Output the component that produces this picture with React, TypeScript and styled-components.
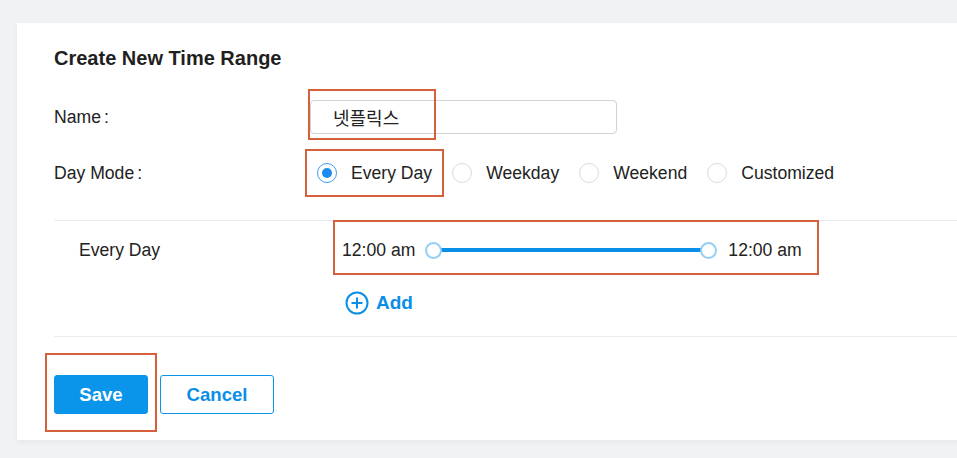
import styled, { createGlobalStyle } from "styled-components";

const Global = createGlobalStyle`
    html, body {
        margin: 0;
        padding: 0;
        background: #f1f2f4;
        overflow: hidden;
    }
    body {
        font-family: "Liberation Sans", Arial, "Noto Sans CJK KR", sans-serif;
        color: #222;
    }
`;

const Page = styled.div`
    position: relative;
    width: 957px;
    height: 458px;
    padding: 23px 0 0 17px;
    box-sizing: border-box;
`;

const Card = styled.section`
    width: 960px;
    height: 417px;
    box-sizing: border-box;
    background: #fff;
    padding: 23px 0 0 37px;
    box-shadow: 0 2px 6px rgba(0, 0, 0, 0.05);
`;

const Title = styled.h2`
    margin: 0 0 23px;
    height: 24px;
    line-height: 24px;
    font-size: 20px;
    font-weight: bold;
    color: #1f1f1f;
`;

const Form = styled.div`
    display: flex;
    flex-direction: column;
    gap: 8px;
    margin-bottom: 23px;
`;

const FormRow = styled.div`
    display: flex;
    align-items: center;
    height: 48px;
`;

const Label = styled.div`
    width: 256px;
    font-size: 17.6px;
    color: #222;
`;

const Colon = styled.span`
    margin-left: 3px;
`;

const TextInput = styled.input`
    width: 307px;
    height: 34px;
    box-sizing: border-box;
    border: 1px solid #cfd2d6;
    border-radius: 4px;
    padding: 0 0 0 22px;
    font-family: "Noto Sans CJK KR", sans-serif;
    font-size: 18px;
    color: #222;
    outline: none;
`;

const RadioGroup = styled.div`
    display: flex;
    align-items: center;
    padding-left: 7px;
    gap: 20px;
`;

const RadioItem = styled.label`
    display: flex;
    align-items: center;
    gap: 14px;
    font-size: 17.6px;
    color: #222;
`;

const RadioDot = styled.span<{ $checked?: boolean }>`
    width: 20px;
    height: 20px;
    box-sizing: border-box;
    border-radius: 50%;
    border: 1px solid ${(p) => (p.$checked ? "#3d9cf0" : "#d9dadc")};
    display: flex;
    align-items: center;
    justify-content: center;
    &::after {
        content: "";
        width: 10px;
        height: 10px;
        border-radius: 50%;
        background: ${(p) => (p.$checked ? "#1a8cf0" : "transparent")};
    }
`;

const Divider = styled.div`
    height: 1px;
    background: #ebecee;
`;

const TimeSection = styled.div`
    display: flex;
    padding-top: 14px;
    height: 115px;
    box-sizing: border-box;
`;

const TimeLabel = styled.div`
    width: 288px;
    padding-left: 25px;
    box-sizing: border-box;
    height: 30px;
    line-height: 30px;
    font-size: 17.6px;
    color: #222;
`;

const TimeColumn = styled.div`
    display: flex;
    flex-direction: column;
    gap: 26px;
`;

const SliderRow = styled.div`
    display: flex;
    align-items: center;
    height: 30px;
    font-size: 17.6px;
    color: #222;
`;

const Track = styled.div`
    position: relative;
    width: 292px;
    height: 17px;
    margin: 0 11px 0 10px;
    display: flex;
    align-items: center;
    &::before {
        content: "";
        position: absolute;
        left: 8px;
        right: 8px;
        height: 4px;
        background: #0a8fe8;
    }
`;

const Thumb = styled.span<{ $side: "left" | "right" }>`
    position: absolute;
    ${(p) => p.$side}: 0;
    width: 17px;
    height: 17px;
    box-sizing: border-box;
    border-radius: 50%;
    border: 2px solid #94cff6;
    background: #fff;
`;

const AddButton = styled.button`
    display: flex;
    align-items: center;
    gap: 7px;
    height: 24px;
    border: none;
    background: none;
    padding: 0 0 0 3px;
    font-family: inherit;
    font-size: 19px;
    font-weight: bold;
    color: #0a8fe8;
    cursor: pointer;
`;

const Actions = styled.div`
    display: flex;
    gap: 12px;
    padding-top: 38px;
`;

const Button = styled.button<{ $primary?: boolean }>`
    height: 39px;
    padding: 0;
    width: ${(p) => (p.$primary ? 94 : 114)}px;
    box-sizing: border-box;
    border-radius: 3px;
    border: 1px solid #0a94ea;
    background: ${(p) => (p.$primary ? "#0a94ea" : "#fff")};
    color: ${(p) => (p.$primary ? "#fff" : "#0a8fe8")};
    font-family: inherit;
    font-size: 18.6px;
    font-weight: bold;
    cursor: pointer;
`;

const Mark = styled.div`
    position: absolute;
    box-sizing: border-box;
    border: 2px solid #d6603c;
    pointer-events: none;
`;

const days = ["Every Day", "Weekday", "Weekend", "Customized"];

const marks = [
    { left: 308, top: 89, width: 128, height: 51 },
    { left: 305, top: 149, width: 139, height: 48 },
    { left: 333, top: 220, width: 486, height: 55 },
    { left: 45, top: 353, width: 112, height: 79 },
];

function PlusCircle() {
    return (
        <svg width="24" height="24" viewBox="0 0 24 24" fill="none" stroke="#0a8fe8" strokeWidth="2">
            <circle cx="12" cy="12" r="10.5" />
            <path d="M12 6.5v11M6.5 12h11" />
        </svg>
    );
}

export default function App() {
    return (
        <Page>
            <Global />
            <Card>
                <Title>Create New Time Range</Title>
                <Form>
                    <FormRow>
                        <Label>
                            Name<Colon>:</Colon>
                        </Label>
                        <TextInput defaultValue="넷플릭스" />
                    </FormRow>
                    <FormRow>
                        <Label>
                            Day Mode<Colon>:</Colon>
                        </Label>
                        <RadioGroup>
                            {days.map((d, i) => (
                                <RadioItem key={d}>
                                    <RadioDot $checked={i === 0} />
                                    {d}
                                </RadioItem>
                            ))}
                        </RadioGroup>
                    </FormRow>
                </Form>
                <Divider />
                <TimeSection>
                    <TimeLabel>Every Day</TimeLabel>
                    <TimeColumn>
                        <SliderRow>
                            12:00 am
                            <Track>
                                <Thumb $side="left" />
                                <Thumb $side="right" />
                            </Track>
                            12:00 am
                        </SliderRow>
                        <AddButton>
                            <PlusCircle />
                            Add
                        </AddButton>
                    </TimeColumn>
                </TimeSection>
                <Divider />
                <Actions>
                    <Button $primary>Save</Button>
                    <Button>Cancel</Button>
                </Actions>
            </Card>
            {marks.map((m, i) => (
                <Mark key={i} style={m} />
            ))}
        </Page>
    );
}
